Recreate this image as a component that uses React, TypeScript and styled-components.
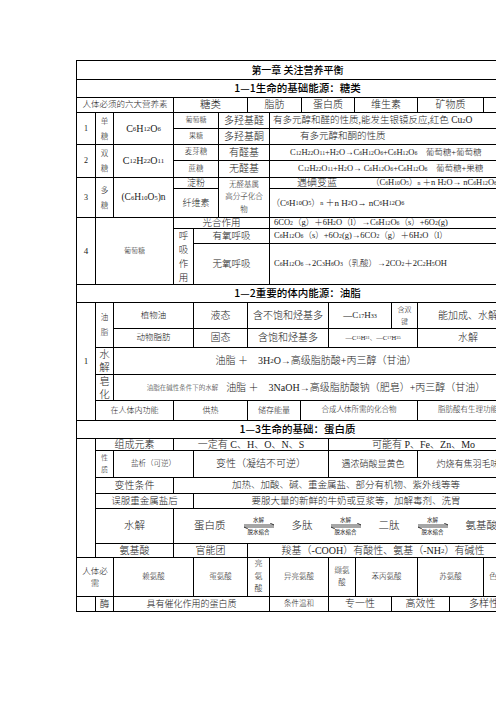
import React, { ReactNode } from "react";
import styled, { createGlobalStyle } from "styled-components";

const GlobalStyle = createGlobalStyle`
  html, body {
    margin: 0;
    background: #fff;
    overflow: hidden;
  }
  body {
    font-family: "Liberation Serif", "Noto Sans CJK SC", serif;
    color: #1a1a1a;
  }
`;

// column / row lines in page pixels, one set per section of the sheet
const tracks = (l: number[]) =>
  l
    .slice(1)
    .map((v, i) => `${v - l[i] - 1}px`)
    .join(" ");
const at = (l: number[]) => (a: number, b: number) =>
  `${l.indexOf(a) + 1} / ${l.indexOf(b) + 1}`;

const Page = styled.div`
  padding: 60px 0 0 76px;
  width: 600px;
`;

const Section = styled.div<{ $cols: string; $rows: string }>`
  display: grid;
  grid-template-columns: ${(p) => p.$cols};
  grid-template-rows: ${(p) => p.$rows};
  gap: 1px;
  padding: 1px;
  background: #000;
  width: max-content;

  & + & {
    margin-top: -1px;
  }
`;

const Cell = styled.div<{
  $c: string;
  $r: string;
  $fs?: number;
  $left?: number;
  $lh?: number;
}>`
  grid-column: ${(p) => p.$c};
  grid-row: ${(p) => p.$r};
  background: #fff;
  display: flex;
  align-items: center;
  justify-content: ${(p) => (p.$left !== undefined ? "flex-start" : "center")};
  padding-left: ${(p) => p.$left ?? 0}px;
  font-size: ${(p) => p.$fs ?? 10}px;
  font-weight: 300;
  line-height: ${(p) => (p.$lh ? `${p.$lh}px` : 1.15)};
  white-space: pre;
  text-align: center;
  overflow: hidden;
`;

const Heading = styled(Cell)`
  font-family: "Noto Sans CJK SC", sans-serif;
  font-weight: 500;
  color: #000;
`;

const Sub = styled.sub`
  font-size: 0.68em;
  vertical-align: -0.28em;
  line-height: 0;
`;

const Note = styled.span`
  font-size: 6.5px;
  margin-right: 8px;
`;

const Lead = styled.span`
  font-size: 10px;
  margin-right: 34px;
`;

const Flow = styled.div`
  display: flex;
  align-items: center;
  gap: 17px;
  padding-left: 20px;
`;

const ArrowWrap = styled.span`
  display: inline-flex;
  flex-direction: column;
  align-items: center;
  font-size: 5.5px;
  line-height: 6px;
  font-weight: 400;
`;

function Chem({ children }: { children: string }) {
  const out: ReactNode[] = [];
  let buf = "";
  let sub = "";
  const flush = () => {
    if (buf) out.push(buf);
    buf = "";
  };
  const flushSub = () => {
    if (sub) out.push(<Sub key={out.length}>{sub}</Sub>);
    sub = "";
  };
  const s = children;
  for (let i = 0; i < s.length; i++) {
    const ch = s[i];
    const prev = s[i - 1] ?? "";
    const isSub =
      (/[0-9]/.test(ch) && (/[A-Za-z)）]/.test(prev) || (sub && /[0-9]/.test(prev)))) ||
      (ch === "n" && prev === "）");
    if (isSub) {
      flush();
      sub += ch;
    } else {
      flushSub();
      buf += ch;
    }
  }
  flushSub();
  flush();
  return <>{out}</>;
}

const Equilibrium = () => (
  <ArrowWrap>
    <span>水解</span>
    <svg width="32" height="6" viewBox="0 0 32 6">
      <path d="M1 2H31L27 0" fill="none" stroke="#000" strokeWidth="0.7" />
      <path d="M31 4H1L5 6" fill="none" stroke="#000" strokeWidth="0.7" />
    </svg>
    <span>脱水缩合</span>
  </ArrowWrap>
);

const XA = [76, 95, 113, 173, 193, 218, 247, 269, 301, 354, 417, 483, 518];
const YA = [60, 79, 97, 112, 128, 144, 160, 177, 188, 217, 228, 243, 284];
const XB = [76, 95, 113, 173, 193, 247, 300, 328, 391, 417, 518];
const YB = [284, 302, 328, 347, 374, 400, 420];
const XC = [76, 95, 113, 173, 193, 247, 269, 328, 355, 391, 417, 449, 483, 518];
const YC = [420, 438, 450, 477, 493, 508, 543, 557, 596, 611];

const Sugars = () => {
  const c = at(XA);
  const r = at(YA);
  return (
    <Section $cols={tracks(XA)} $rows={tracks(YA)}>
      <Heading $c={c(76, 518)} $r={r(60, 79)} $fs={10}>
        第一章 关注营养平衡
      </Heading>
      <Heading $c={c(76, 518)} $r={r(79, 97)} $fs={10.5}>
        1—1生命的基础能源：糖类
      </Heading>

      <Cell $c={c(76, 173)} $r={r(97, 112)} $fs={8.5}>人体必须的六大营养素</Cell>
      <Cell $c={c(173, 247)} $r={r(97, 112)} $fs={10.5}>糖类</Cell>
      <Cell $c={c(247, 301)} $r={r(97, 112)}>脂肪</Cell>
      <Cell $c={c(301, 354)} $r={r(97, 112)}>蛋白质</Cell>
      <Cell $c={c(354, 417)} $r={r(97, 112)}>维生素</Cell>
      <Cell $c={c(417, 483)} $r={r(97, 112)}>矿物质</Cell>
      <Cell $c={c(483, 518)} $r={r(97, 112)} />

      <Cell $c={c(76, 95)} $r={r(112, 144)} $fs={8}>1</Cell>
      <Cell $c={c(95, 113)} $r={r(112, 144)} $fs={7.5} $lh={15}>{"单\n糖"}</Cell>
      <Cell $c={c(113, 173)} $r={r(112, 144)} $fs={10}><Chem>C6H12O6</Chem></Cell>
      <Cell $c={c(173, 218)} $r={r(112, 128)} $fs={7}>葡萄糖</Cell>
      <Cell $c={c(218, 269)} $r={r(112, 128)} $fs={10}>多羟基醛</Cell>
      <Cell $c={c(269, 518)} $r={r(112, 128)} $fs={9.5} $left={3}>
        <Chem>有多元醇和醛的性质,能发生银镜反应,红色 Cu2O</Chem>
      </Cell>
      <Cell $c={c(173, 218)} $r={r(128, 144)} $fs={7}>果糖</Cell>
      <Cell $c={c(218, 269)} $r={r(128, 144)} $fs={10}>多羟基酮</Cell>
      <Cell $c={c(269, 518)} $r={r(128, 144)} $fs={9.5} $left={30}>有多元醇和酮的性质</Cell>

      <Cell $c={c(76, 95)} $r={r(144, 177)} $fs={8}>2</Cell>
      <Cell $c={c(95, 113)} $r={r(144, 177)} $fs={7.5} $lh={15}>{"双\n糖"}</Cell>
      <Cell $c={c(113, 173)} $r={r(144, 177)} $fs={10}><Chem>C12H22O11</Chem></Cell>
      <Cell $c={c(173, 218)} $r={r(144, 160)} $fs={7.5}>麦芽糖</Cell>
      <Cell $c={c(218, 269)} $r={r(144, 160)} $fs={10}>有醛基</Cell>
      <Cell $c={c(269, 518)} $r={r(144, 160)} $fs={8.5} $left={20}>
        <Chem>C12H22O11+H2O→C6H12O6+C6H12O6　葡萄糖+葡萄糖</Chem>
      </Cell>
      <Cell $c={c(173, 218)} $r={r(160, 177)} $fs={7.5}>蔗糖</Cell>
      <Cell $c={c(218, 269)} $r={r(160, 177)} $fs={10}>无醛基</Cell>
      <Cell $c={c(269, 518)} $r={r(160, 177)} $fs={8.5} $left={28}>
        <Chem>C12H22O11+H2O→ C6H12O6+C6H12O6　葡萄糖+果糖</Chem>
      </Cell>

      <Cell $c={c(76, 95)} $r={r(177, 217)} $fs={8}>3</Cell>
      <Cell $c={c(95, 113)} $r={r(177, 217)} $fs={7.5} $lh={15}>{"多\n糖"}</Cell>
      <Cell $c={c(113, 173)} $r={r(177, 217)} $fs={9.5}>
        (C<Sub>6</Sub>H<Sub>10</Sub>O<Sub>5</Sub>)n
      </Cell>
      <Cell $c={c(173, 218)} $r={r(177, 188)} $fs={9}>淀粉</Cell>
      <Cell $c={c(173, 218)} $r={r(188, 217)} $fs={9}>纤维素</Cell>
      <Cell $c={c(218, 269)} $r={r(177, 217)} $fs={7.5} $lh={12.5}>
        {"无醛基属\n高分子化合\n物"}
      </Cell>
      <Cell $c={c(269, 518)} $r={r(177, 188)} $fs={8.5} $left={27}>
        <Lead>遇碘变蓝</Lead>
        <Chem>（C6H10O5）n ＋n H2O→ nC6H12O6</Chem>
      </Cell>
      <Cell $c={c(269, 518)} $r={r(188, 217)} $fs={9} $left={1}>
        <Chem>（C6H10O5）n ＋n H2O→ nC6H12O6</Chem>
      </Cell>

      <Cell $c={c(76, 95)} $r={r(217, 284)} $fs={9}>4</Cell>
      <Cell $c={c(95, 173)} $r={r(217, 284)} $fs={7}>葡萄糖</Cell>
      <Cell $c={c(173, 269)} $r={r(217, 228)} $fs={9.5}>光合作用</Cell>
      <Cell $c={c(269, 518)} $r={r(217, 228)} $fs={8.5} $left={4}>
        <Chem>6CO2（g）＋6H2O（l）→C6H12O6（s）+6O2(g)</Chem>
      </Cell>
      <Cell $c={c(173, 193)} $r={r(228, 284)} $fs={9.5} $lh={14}>{"呼\n吸\n作\n用"}</Cell>
      <Cell $c={c(193, 269)} $r={r(228, 243)} $fs={9.5}>有氧呼吸</Cell>
      <Cell $c={c(269, 518)} $r={r(228, 243)} $fs={8.5} $left={4}>
        <Chem>C6H12O6（s）+6O2(g)→6CO2（g）＋6H2O（l）</Chem>
      </Cell>
      <Cell $c={c(193, 269)} $r={r(243, 284)} $fs={9.5}>无氧呼吸</Cell>
      <Cell $c={c(269, 518)} $r={r(243, 284)} $fs={8.5} $left={4}>
        <Chem>C6H12O6→2C3H6O3（乳酸）→2CO2＋2C2H5OH</Chem>
      </Cell>
    </Section>
  );
};

const Fats = () => {
  const c = at(XB);
  const r = at(YB);
  return (
    <Section $cols={tracks(XB)} $rows={tracks(YB)}>
      <Heading $c={c(76, 518)} $r={r(284, 302)} $fs={10.5}>
        1—2重要的体内能源：油脂
      </Heading>
      <Cell $c={c(76, 95)} $r={r(302, 420)} $fs={9}>1</Cell>
      <Cell $c={c(95, 113)} $r={r(302, 347)} $fs={7.5} $lh={15}>{"油\n脂"}</Cell>
      <Cell $c={c(113, 193)} $r={r(302, 328)} $fs={8.5}>植物油</Cell>
      <Cell $c={c(193, 247)} $r={r(302, 328)} $fs={10}>液态</Cell>
      <Cell $c={c(247, 328)} $r={r(302, 328)} $fs={10}>含不饱和烃基多</Cell>
      <Cell $c={c(328, 391)} $r={r(302, 328)} $fs={9}><Chem>—C17H33</Chem></Cell>
      <Cell $c={c(391, 417)} $r={r(302, 328)} $fs={7} $lh={12}>{"含双\n键"}</Cell>
      <Cell $c={c(417, 518)} $r={r(302, 328)} $fs={10}>能加成、水解</Cell>

      <Cell $c={c(113, 193)} $r={r(328, 347)} $fs={8.5}>动物脂肪</Cell>
      <Cell $c={c(193, 247)} $r={r(328, 347)} $fs={10}>固态</Cell>
      <Cell $c={c(247, 328)} $r={r(328, 347)} $fs={10}>含饱和烃基多</Cell>
      <Cell $c={c(328, 417)} $r={r(328, 347)} $fs={6.5}><Chem>—C15H31、—C17H35</Chem></Cell>
      <Cell $c={c(417, 518)} $r={r(328, 347)} $fs={10}>水解</Cell>

      <Cell $c={c(95, 113)} $r={r(347, 374)} $fs={10.5} $lh={13}>{"水\n解"}</Cell>
      <Cell $c={c(113, 518)} $r={r(347, 374)} $fs={10}>
        <Chem>油脂 ＋　3H2O→高级脂肪酸+丙三醇（甘油）</Chem>
      </Cell>
      <Cell $c={c(95, 113)} $r={r(374, 400)} $fs={10.5} $lh={13}>{"皂\n化"}</Cell>
      <Cell $c={c(113, 518)} $r={r(374, 400)} $fs={10}>
        <Note>油脂在碱性条件下的水解</Note>
        油脂 ＋　3NaOH→高级脂肪酸钠（肥皂）+丙三醇（甘油）
      </Cell>

      <Cell $c={c(95, 173)} $r={r(400, 420)} $fs={8}>在人体内功能</Cell>
      <Cell $c={c(173, 247)} $r={r(400, 420)} $fs={8}>供热</Cell>
      <Cell $c={c(247, 300)} $r={r(400, 420)} $fs={8}>储存能量</Cell>
      <Cell $c={c(300, 417)} $r={r(400, 420)} $fs={7.5}>合成人体所需的化合物</Cell>
      <Cell $c={c(417, 518)} $r={r(400, 420)} $fs={7.5}>脂肪酸有生理功能</Cell>
    </Section>
  );
};

const Proteins = () => {
  const c = at(XC);
  const r = at(YC);
  return (
    <Section $cols={tracks(XC)} $rows={tracks(YC)}>
      <Heading $c={c(76, 518)} $r={r(420, 438)} $fs={10.5}>
        1—3生命的基础：蛋白质
      </Heading>
      <Cell $c={c(76, 95)} $r={r(438, 557)} />

      <Cell $c={c(95, 173)} $r={r(438, 450)} $fs={10}>组成元素</Cell>
      <Cell $c={c(173, 328)} $r={r(438, 450)} $fs={10}>一定有 C、H、O、N、S</Cell>
      <Cell $c={c(328, 518)} $r={r(438, 450)} $fs={10}>可能有 P、Fe、Zn、Mo</Cell>

      <Cell $c={c(95, 113)} $r={r(450, 477)} $fs={7} $lh={12}>{"性\n质"}</Cell>
      <Cell $c={c(113, 193)} $r={r(450, 477)} $fs={7.5}>盐析（可逆）</Cell>
      <Cell $c={c(193, 328)} $r={r(450, 477)} $fs={10}>变性（凝结不可逆）</Cell>
      <Cell $c={c(328, 417)} $r={r(450, 477)} $fs={9}>遇浓硝酸显黄色</Cell>
      <Cell $c={c(417, 518)} $r={r(450, 477)} $fs={9}>灼烧有焦羽毛味</Cell>

      <Cell $c={c(95, 173)} $r={r(477, 493)} $fs={10}>变性条件</Cell>
      <Cell $c={c(173, 518)} $r={r(477, 493)} $fs={9.5}>
        加热、加酸、碱、重金属盐、部分有机物、紫外线等等
      </Cell>
      <Cell $c={c(95, 193)} $r={r(493, 508)} $fs={9.5}>误服重金属盐后</Cell>
      <Cell $c={c(193, 518)} $r={r(493, 508)} $fs={9.5}>
        要服大量的新鲜的牛奶或豆浆等，加解毒剂、洗胃
      </Cell>

      <Cell $c={c(95, 173)} $r={r(508, 543)} $fs={10.5}>水解</Cell>
      <Cell $c={c(173, 518)} $r={r(508, 543)} $fs={10.5} $left={0}>
        <Flow>
          <span>蛋白质</span>
          <Equilibrium />
          <span>多肽</span>
          <Equilibrium />
          <span>二肽</span>
          <Equilibrium />
          <span>氨基酸</span>
        </Flow>
      </Cell>

      <Cell $c={c(95, 173)} $r={r(543, 557)} $fs={10}>氨基酸</Cell>
      <Cell $c={c(173, 247)} $r={r(543, 557)} $fs={10}>官能团</Cell>
      <Cell $c={c(247, 518)} $r={r(543, 557)} $fs={10}>
        <Chem>羧基（-COOH）有酸性、氨基（-NH2）有碱性</Chem>
      </Cell>

      <Cell $c={c(76, 113)} $r={r(557, 596)} $fs={8.5} $lh={12}>{"人体必\n需"}</Cell>
      <Cell $c={c(113, 193)} $r={r(557, 596)} $fs={7.5}>赖氨酸</Cell>
      <Cell $c={c(193, 247)} $r={r(557, 596)} $fs={7.5}>蛋氨酸</Cell>
      <Cell $c={c(247, 269)} $r={r(557, 596)} $fs={8} $lh={12.5}>{"亮\n氨\n酸"}</Cell>
      <Cell $c={c(269, 328)} $r={r(557, 596)} $fs={7.5}>异亮氨酸</Cell>
      <Cell $c={c(328, 355)} $r={r(557, 596)} $fs={7.5} $lh={12}>{"缬氨\n酸"}</Cell>
      <Cell $c={c(355, 417)} $r={r(557, 596)} $fs={7.5}>苯丙氨酸</Cell>
      <Cell $c={c(417, 483)} $r={r(557, 596)} $fs={7.5}>苏氨酸</Cell>
      <Cell $c={c(483, 518)} $r={r(557, 596)} $fs={8}>色氨酸</Cell>

      <Cell $c={c(76, 95)} $r={r(596, 611)} />
      <Cell $c={c(95, 113)} $r={r(596, 611)} $fs={9.5}>酶</Cell>
      <Cell $c={c(113, 269)} $r={r(596, 611)} $fs={9}>具有催化作用的蛋白质</Cell>
      <Cell $c={c(269, 328)} $r={r(596, 611)} $fs={7.5}>条件温和</Cell>
      <Cell $c={c(328, 391)} $r={r(596, 611)} $fs={10}>专一性</Cell>
      <Cell $c={c(391, 449)} $r={r(596, 611)} $fs={10}>高效性</Cell>
      <Cell $c={c(449, 518)} $r={r(596, 611)} $fs={10}>多样性</Cell>
    </Section>
  );
};

export default function App() {
  return (
    <>
      <GlobalStyle />
      <Page>
        <Sugars />
        <Fats />
        <Proteins />
      </Page>
    </>
  );
}
